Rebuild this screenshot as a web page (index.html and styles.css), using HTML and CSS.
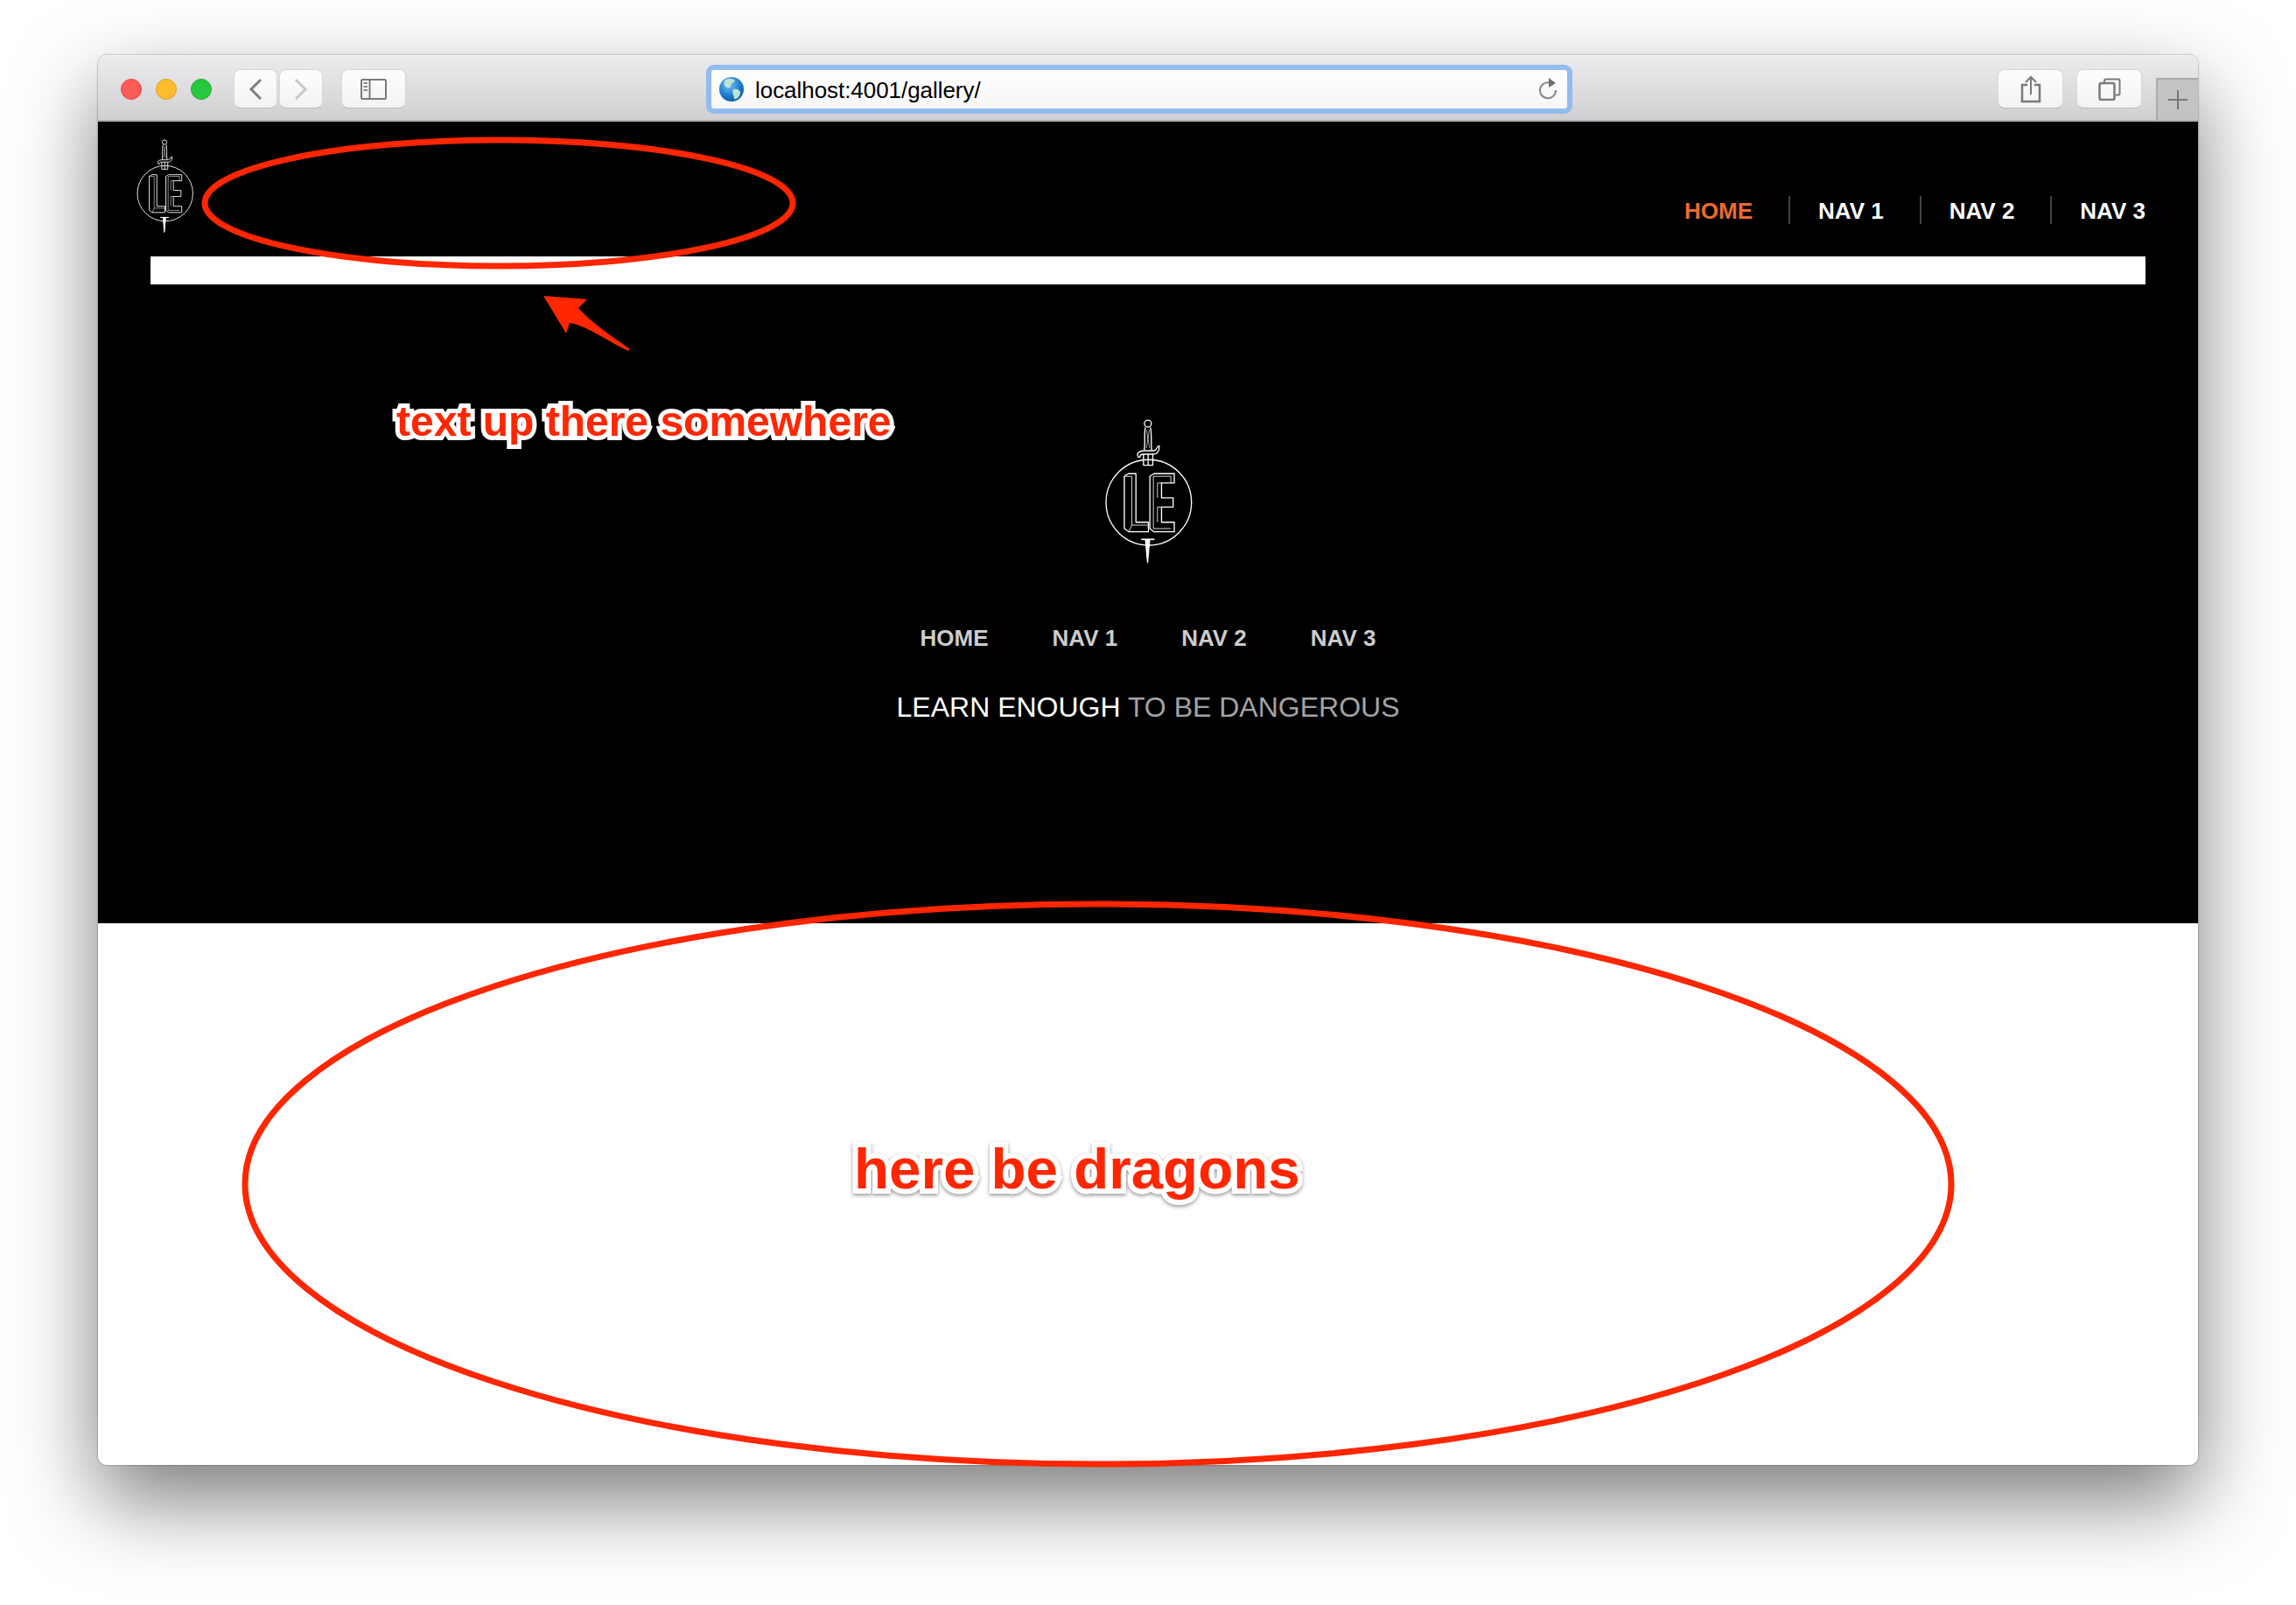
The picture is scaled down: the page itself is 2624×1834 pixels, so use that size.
FILE: index.html
```html
<!DOCTYPE html>
<html lang="en">
<head>
<meta charset="utf-8">
<title>localhost:4001/gallery/</title>
<link rel="stylesheet" href="styles.css">
</head>
<body>
<svg class="defs" width="0" height="0" aria-hidden="true">
  <symbol id="le-logo" viewBox="120 50 310 505">
    <g fill="none" stroke="#fff" stroke-width="4" stroke-linejoin="round">
      <circle cx="276" cy="342" r="147"/>
      <circle cx="273" cy="71" r="12"/>
      <path d="M264 84C260 110 264 135 261 162M282 84C287 110 283 135 286 162"/>
      <path d="M268 92L279 155M278 92L268 155" stroke-width="2.500" opacity=".8"/>
      <path d="M240 186C232 172 244 164 262 164H294C303 164 303 150 312 147C314 160 308 176 292 176H256C248 176 246 180 246 186Z"/>
      <path d="M258 176V214H290V176M274 176V214"/>
      <path d="M250 469H296" stroke-width="5"/>
      <path d="M265 472L272 548L279 472Z" fill="#fff"/>
      <path d="M192 252L206 243H232V410H275V443H208L192 432Z"/>
      <path d="M280 252L294 243H364V275H320V326H360V358H320V410H364V443H294L280 432Z"/>
      <path d="M192 252H218V420H275M218 420L208 443M292 252V432H352M292 252H352V275M320 275H306V326M320 358H306V410" stroke-width="2.500"/>
    </g>
  </symbol>
</svg>

<main class="stage">
  <section class="window">
    <header class="toolbar">
      <div class="lights">
        <span class="light light-red"></span>
        <span class="light light-yellow"></span>
        <span class="light light-green"></span>
      </div>
      <div class="btn-pair">
        <button class="btn btn-nav">
          <svg width="16" height="24" viewBox="0 0 16 24"><path d="M14 1L3 12L14 23" fill="none" stroke="#7f7f7f" stroke-width="3"/></svg>
        </button>
        <button class="btn btn-nav">
          <svg width="16" height="24" viewBox="0 0 16 24"><path d="M2 1L13 12L2 23" fill="none" stroke="#c8c8c8" stroke-width="3"/></svg>
        </button>
      </div>
      <button class="btn btn-side">
        <svg width="30" height="24" viewBox="0 0 30 24"><rect x="1" y="1" width="28" height="22" rx="1.5" fill="none" stroke="#7a7a7a" stroke-width="2"/><path d="M10.500 1V23" stroke="#7a7a7a" stroke-width="2"/><path d="M3.500 5H8M3.500 9H8M3.500 13H8" stroke="#8a8a8a" stroke-width="2"/></svg>
      </button>
      <div class="address">
        <svg class="globe" width="30" height="30" viewBox="0 0 30 30">
          <defs>
            <radialGradient id="globe-fill" cx=".4" cy=".3" r=".8"><stop offset="0" stop-color="#7cc4f4"/><stop offset=".55" stop-color="#1f7fd0"/><stop offset="1" stop-color="#0d4f9c"/></radialGradient>
          </defs>
          <circle cx="15" cy="15" r="14" fill="url(#globe-fill)"/>
          <path d="M8 4C12 2 18 3 19 5C17 8 14 8 14 11C14 14 10 14 8 12C6 10 6 6 8 4ZM17 15C21 14 26 16 25 20C24 24 20 27 18 26C18 22 15 19 17 15Z" fill="#bfe3d8"/>
        </svg>
        <span class="url">localhost:4001/gallery/</span>
        <svg class="reload" width="22" height="28" viewBox="0 0 22 28"><path d="M13 6.500A9 9 0 1 0 20 15" fill="none" stroke="#8a8a8a" stroke-width="2"/><path d="M12 1L20 7L12 12Z" fill="#6f6f6f"/></svg>
      </div>
      <button class="btn btn-tool">
        <svg width="24" height="32" viewBox="0 0 24 32"><path d="M8 11H2V30H22V11H16" fill="none" stroke="#7a7a7a" stroke-width="2.500"/><path d="M12 22V2M6 8L12 2L18 8" fill="none" stroke="#7a7a7a" stroke-width="2"/></svg>
      </button>
      <button class="btn btn-tool btn-tabs">
        <svg width="26" height="26" viewBox="0 0 26 26"><rect x="1.500" y="6" width="17" height="19" rx="2" fill="none" stroke="#7a7a7a" stroke-width="2.500"/><path d="M7 5V3C7 2 8 1.500 9 1.500H23C24 1.500 24.500 2 24.500 3V18C24.500 19 24 19.500 23 19.500H20" fill="none" stroke="#7a7a7a" stroke-width="2"/></svg>
      </button>
      <div class="new-tab">
        <svg width="24" height="24" viewBox="0 0 24 24"><path d="M12 1V23M1 12H23" stroke="#777" stroke-width="2"/></svg>
      </div>
    </header>

    <div class="site">
      <div class="site-head">
        <svg class="logo-small"><use href="#le-logo"/></svg>
        <ul class="main-nav">
          <li class="main-item main-active">HOME</li>
          <li class="main-item">NAV 1</li>
          <li class="main-item">NAV 2</li>
          <li class="main-item">NAV 3</li>
        </ul>
      </div>
      <div class="white-bar"></div>
      <div class="hero">
        <svg class="logo-large"><use href="#le-logo"/></svg>
        <ul class="hero-nav">
          <li>HOME</li>
          <li>NAV 1</li>
          <li>NAV 2</li>
          <li>NAV 3</li>
        </ul>
        <p class="tagline">LEARN ENOUGH <span class="tagline-dim">TO BE DANGEROUS</span></p>
      </div>
    </div>
    <div class="content"></div>
  </section>

  <svg class="marks" viewBox="0 0 2624 1834" width="2624" height="1834" aria-hidden="true">
    <ellipse cx="570" cy="232" rx="336" ry="72" fill="none" stroke="#ff2600" stroke-width="7"/>
    <ellipse cx="1255" cy="1353" rx="975" ry="320" fill="none" stroke="#ff2600" stroke-width="7"/>
    <path d="M621 338L671 342L661 352C675 368 700 385 720 399L718 401C695 390 668 371 651 369L647 381Z" fill="#ff2600"/>
  </svg>
  <span class="note note-up">text up there somewhere</span>
  <span class="note note-dragons">here be dragons</span>
</main>
</body>
</html>
```

FILE: styles.css
```css
* { box-sizing: border-box; }

html, body {
  margin: 0;
  padding: 0;
  background: #fff;
}

body {
  font-family: "Liberation Sans", Arial, sans-serif;
  overflow: hidden;
}

.defs { position: absolute; }

.stage {
  position: relative;
  width: 2624px;
  height: 1834px;
  padding: 63px 112px 160px;
}

.window {
  width: 2400px;
  height: 1611px;
  display: flex;
  flex-direction: column;
  background: #fff;
  border-radius: 10px;
  box-shadow: 0 40px 96px rgba(0, 0, 0, .52), 0 0 2px rgba(0, 0, 0, .55);
}

/* browser chrome */
.toolbar {
  height: 76px;
  display: flex;
  align-items: flex-start;
  padding: 16px 0 0 26px;
  position: relative;
  background: linear-gradient(#ecebed, #d1cfd2);
  border-top: 1px solid #f6f6f6;
  border-bottom: 2px solid #b2b1b2;
  border-radius: 10px 10px 0 0;
}

.lights {
  display: flex;
  gap: 16px;
  margin-top: 10px;
}

.light {
  width: 24px;
  height: 24px;
  border-radius: 50%;
}
.light-red { background: #fc5b57; border: 1px solid #e5453f; }
.light-yellow { background: #fdbc2e; border: 1px solid #dfa023; }
.light-green { background: #27c83f; border: 1px solid #1fad2e; }

.btn {
  height: 45px;
  padding: 0;
  display: flex;
  align-items: center;
  justify-content: center;
  background: linear-gradient(#fefefe, #f2f2f2);
  border: 1px solid #d9d8d9;
  border-bottom-color: #b9b8b9;
  border-radius: 8px;
}

.btn-pair {
  display: flex;
  gap: 2px;
  margin: -1px 0 0 25px;
}
.btn-nav { width: 50px; }
.btn-side {
  width: 74px;
  margin: -1px 0 0 21px;
}

.address {
  width: 990px;
  height: 56px;
  margin: -6px 0 0 343px;
  padding: 0 11px 0 8px;
  display: flex;
  align-items: center;
  background: linear-gradient(#fff, #f6f6f7);
  border: 6px solid #92bcee;
  border-radius: 9px;
}
.globe { flex: none; }
.url {
  margin-left: 12px;
  padding-top: 2px;
  font-size: 26px;
  letter-spacing: -.05px;
  color: #000;
  flex: 1;
}
.reload { flex: none; }

.btn-tool {
  width: 75px;
  margin: -1px 0 0 486px;
}
.btn-tabs { margin-left: 15px; }

.new-tab {
  position: absolute;
  right: 0;
  bottom: 0;
  width: 48px;
  height: 48px;
  display: flex;
  align-items: center;
  justify-content: center;
  background: #c4c3c4;
  border: 2px solid #acabac;
  border-width: 2px 0 0 2px;
}

/* site */
.site {
  height: 916px;
  background: #000;
}

.site-head {
  height: 154px;
  display: flex;
  justify-content: space-between;
  align-items: flex-start;
}

.logo-small {
  width: 67px;
  height: 109px;
  margin: 19px 0 0 43px;
}

.main-nav {
  list-style: none;
  display: flex;
  margin: 85px 60px 0 0;
  padding: 0;
}

.main-item {
  height: 32px;
  line-height: 34px;
  padding: 0 41px 0 32px;
  font-size: 26px;
  font-weight: 700;
  color: #fff;
  border-right: 2px solid #444;
}
.main-item:first-child { padding-left: 0; }
.main-item:last-child { padding-right: 0; border-right: 0; }
.main-active { color: #ed6b2d; }

.white-bar {
  height: 32px;
  margin: 0 60px;
  background: #fff;
}

.hero {
  display: flex;
  flex-direction: column;
  align-items: center;
  padding-top: 152px;
}

.logo-large {
  display: block;
  width: 103px;
  height: 168px;
}

.hero-nav {
  list-style: none;
  display: flex;
  gap: 73px;
  margin: 69px 0 0;
  padding: 0;
  font-size: 26px;
  line-height: 30px;
  font-weight: 700;
  color: #ccc;
}

.tagline {
  margin: 46px 0 0;
  font-size: 32px;
  line-height: 36px;
  color: #fff;
}
.tagline-dim { color: #a3a3a3; }

.content {
  flex: 1;
  background: #fff;
  border-radius: 0 0 10px 10px;
}

/* annotations drawn over the screenshot */
.marks {
  position: absolute;
  left: 0;
  top: 0;
  pointer-events: none;
}

.note {
  position: absolute;
  font-weight: 700;
  color: #ff2600;
  white-space: nowrap;
  paint-order: stroke fill;
  -webkit-text-stroke: 10px #fff;
  filter: drop-shadow(0 2px 2px rgba(0, 0, 0, .4));
}

.note-up {
  left: 453px;
  top: 454px;
  font-size: 48px;
  line-height: 56px;
}

.note-dragons {
  left: 976px;
  top: 1299px;
  font-size: 65.500px;
  line-height: 74px;
  -webkit-text-stroke-width: 12px;
}
```
